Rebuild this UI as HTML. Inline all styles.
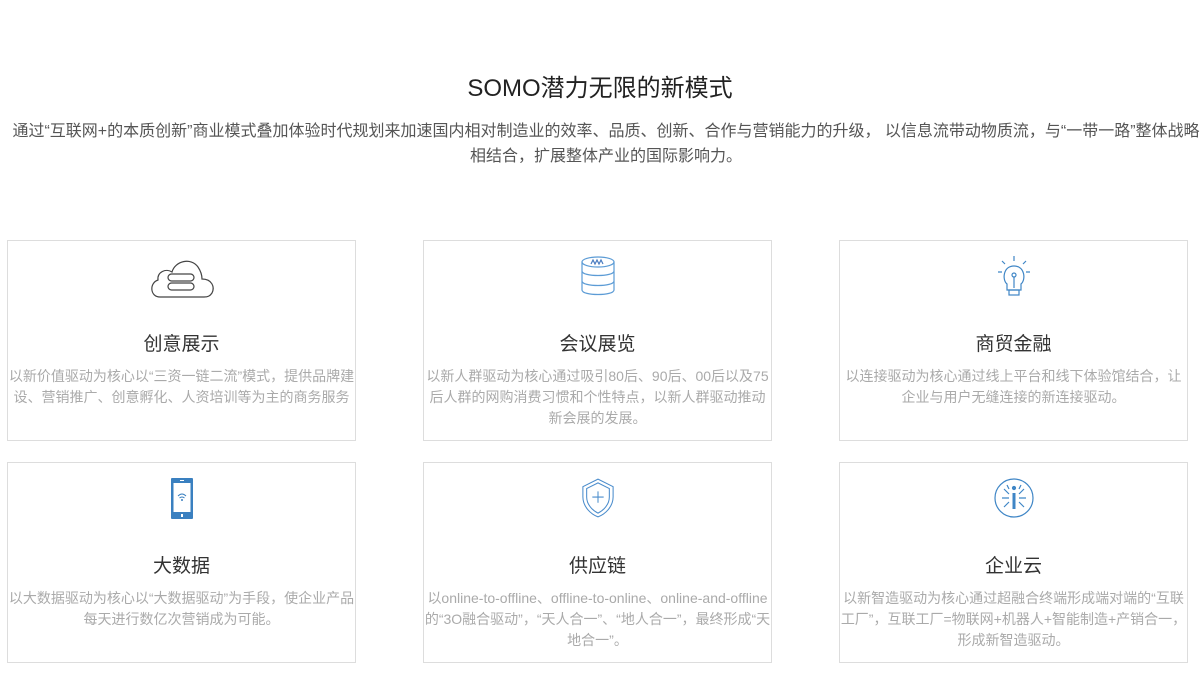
<!DOCTYPE html>
<html><head><meta charset="utf-8"><style>
body{margin:0;width:1200px;height:680px;overflow:hidden;background:#fff;font-family:"Liberation Sans","Noto Sans CJK SC",sans-serif;position:relative}
.h{position:absolute;top:68px;left:0;width:1200px;text-align:center;font-size:24px;color:#222}
.s{position:absolute;left:-194px;width:1600px;text-align:center;font-size:16px;color:#555;white-space:nowrap}
.c{position:absolute;width:347px;height:199px;border:1px solid #ddd;text-align:center}
.c svg{position:absolute;left:50%;transform:translateX(-50%)}
.t{position:absolute;top:88px;left:0;right:0;font-size:19px;color:#333}
.d{position:absolute;top:125px;left:-20px;right:-20px;font-size:14px;line-height:21px;color:#aaa;white-space:nowrap}
</style></head><body>
<div class="h">SOMO潜力无限的新模式</div>
<div class="s" style="top:117px">通过“互联网+的本质创新”商业模式叠加体验时代规划来加速国内相对制造业的效率、品质、创新、合作与营销能力的升级， 以信息流带动物质流，与“一带一路”整体战略</div>
<div class="s" style="top:142px">相结合，扩展整体产业的国际影响力。</div>

<div class="c" style="left:7px;top:240px">
<svg style="top:14px" width="68" height="44" viewBox="0 0 68 44"><path d="M12 42 C2 42 1 28 10 25 C9 17 18 13 24 17 C27 6 43 2 50 12 C54 18 54 22 54 24 C64 24 67 32 64 38 C62 41 60 42 56 42 Z" fill="none" stroke="#444" stroke-width="1.2"/><rect x="20" y="19" width="26" height="7" rx="3.5" fill="none" stroke="#444" stroke-width="1.2"/><rect x="20" y="28" width="26" height="7" rx="3.5" fill="none" stroke="#444" stroke-width="1.2"/></svg>
<div class="t">创意展示</div><div class="d">以新价值驱动为核心以“三资一链二流”模式，提供品牌建<br>设、营销推广、创意孵化、人资培训等为主的商务服务</div></div>

<div class="c" style="left:423px;top:240px">
<svg style="top:14px" width="36" height="42" viewBox="0 0 36 42"><g fill="none" stroke="#5b9bd5" stroke-width="1.2"><ellipse cx="18" cy="7" rx="16" ry="5"/><path d="M2 7V35C2 41 34 41 34 35V7M2 16C2 22 34 22 34 16M2 26C2 32 34 32 34 26"/><path d="M11 9L13 5L15 9L17 5L19 9L21 5L23 9" stroke="#4a7cc0"/></g></svg>
<div class="t">会议展览</div><div class="d">以新人群驱动为核心通过吸引80后、90后、00后以及75<br>后人群的网购消费习惯和个性特点，以新人群驱动推动<br>新会展的发展。</div></div>

<div class="c" style="left:839px;top:240px">
<svg style="top:13px" width="40" height="44" viewBox="0 0 36 44"><g fill="none" stroke="#3f86c6" stroke-width="1.2"><path d="M18 2V7M6 7L9 10M30 7L27 10M2 18H6M30 18H34"/><path d="M11 30C6 26 7 12 18 12C29 12 30 26 25 30V36H11Z"/><rect x="13" y="36" width="10" height="5"/><circle cx="18" cy="21" r="2"/><path d="M18 23V34"/></g></svg>
<div class="t">商贸金融</div><div class="d">以连接驱动为核心通过线上平台和线下体验馆结合，让<br>企业与用户无缝连接的新连接驱动。</div></div>

<div class="c" style="left:7px;top:462px">
<svg style="top:15px" width="22" height="41" viewBox="0 0 22 41"><rect x="0" y="0" width="22" height="41" rx="1" fill="#3a80c0"/><rect x="2.5" y="5" width="17" height="29" fill="#fff"/><path d="M7 18Q11 14 15 18M8.5 20Q11 18 13.5 20" stroke="#3a80c0" fill="none"/><circle cx="11" cy="22" r="1" fill="#3a80c0"/><rect x="9" y="2" width="4" height="1" fill="#fff"/><rect x="10" y="36" width="2" height="3" fill="#fff"/></svg>
<div class="t">大数据</div><div class="d">以大数据驱动为核心以“大数据驱动”为手段，使企业产品<br>每天进行数亿次营销成为可能。</div></div>

<div class="c" style="left:423px;top:462px">
<svg style="top:14px" width="34" height="42" viewBox="0 0 36 42"><g fill="none" stroke="#4a8ccc" stroke-width="1.1"><path d="M18 1L34 9V20C34 30 26 38 18 41C10 38 2 30 2 20V9Z"/><path d="M18 5L30 11V20C30 28 24 34 18 37C12 34 6 28 6 20V11Z"/><path d="M18 14V26M12 20H24"/></g></svg>
<div class="t">供应链</div><div class="d">以online-to-offline、offline-to-online、online-and-offline<br>的“3O融合驱动”，“天人合一”、“地人合一”，最终形成“天<br>地合一”。</div></div>

<div class="c" style="left:839px;top:462px">
<svg style="top:14px" width="42" height="42" viewBox="0 0 42 42"><g fill="none" stroke="#3f86c6" stroke-width="1.2"><circle cx="21" cy="21" r="19"/><path d="M21 16V32" stroke-width="3"/><circle cx="21" cy="11" r="1.5" fill="#3f86c6"/><path d="M9 21H16M26 21H33M11 12L16 17M31 12L26 17M11 30L16 25M31 30L26 25M14 8L16 12M28 8L26 12"/></g></svg>
<div class="t">企业云</div><div class="d">以新智造驱动为核心通过超融合终端形成端对端的“互联<br>工厂”，互联工厂=物联网+机器人+智能制造+产销合一，<br>形成新智造驱动。</div></div>
</body></html>
